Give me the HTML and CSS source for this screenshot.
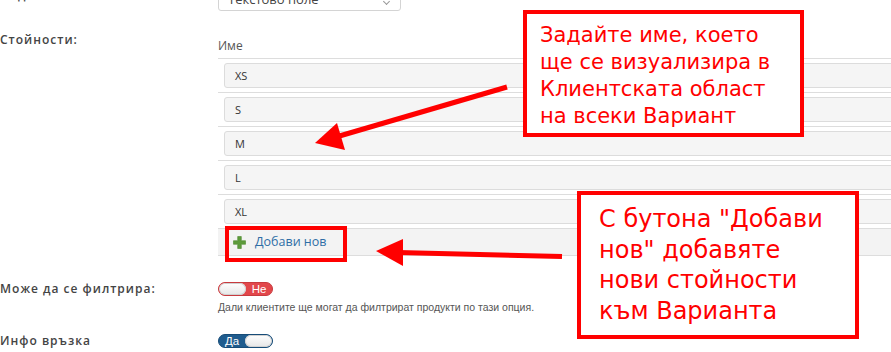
FILE: index.html
```html
<!DOCTYPE html>
<html lang="bg">
<head>
<meta charset="utf-8">
<title>Стойности</title>
<link rel="stylesheet" href="styles.css">
</head>
<body>
<div class="page">
  <div class="form">
    <div class="row row-type">
      <div class="label label-type">Вид:</div>
      <div class="field">
        <div class="select">Текстово поле<span class="caret"></span></div>
      </div>
    </div>

    <div class="row row-values">
      <div class="label">Стойности:</div>
      <div class="field">
        <div class="values">
          <div class="values-head">Име</div>
          <div class="value-row"><div class="value-input">XS</div></div>
          <div class="value-row"><div class="value-input">S</div></div>
          <div class="value-row"><div class="value-input">M</div></div>
          <div class="value-row"><div class="value-input">L</div></div>
          <div class="value-row"><div class="value-input">XL</div></div>
          <div class="add-row">
            <a class="add-btn">
              <svg class="plus" width="13" height="13" viewBox="0 0 13 13"><path d="M4.7 0.5h3.6v4.2h4.2v3.6h-4.2v4.2h-3.6v-4.2h-4.2v-3.6h4.2z" fill="#5d9b3b" stroke="#4c8a2e" stroke-width="0.6" stroke-linejoin="round"/></svg>
              <span>Добави нов</span>
            </a>
          </div>
        </div>
      </div>
    </div>

    <div class="row row-filter">
      <div class="label label-small">Може да се филтрира:</div>
      <div class="field">
        <div class="toggle toggle-off"><span class="knob"></span><span class="toggle-text">Не</span></div>
        <div class="help">Дали клиентите ще могат да филтрират продукти по тази опция.</div>
      </div>
    </div>

    <div class="row row-info">
      <div class="label label-small">Инфо връзка</div>
      <div class="field">
        <div class="toggle toggle-on"><span class="toggle-text">Да</span><span class="knob"></span></div>
      </div>
    </div>
  </div>

  <div class="note note-name">Задайте име, което<br>ще се визуализира в<br>Клиентската област<br>на всеки Вариант</div>
  <div class="note note-add">С бутона "Добави<br>нов" добавяте<br>нови стойности<br>към Варианта</div>
  <div class="highlight"></div>
  <svg class="arrows" width="891" height="352" viewBox="0 0 891 352">
    <line x1="507" y1="87" x2="336" y2="137" stroke="#ff0000" stroke-width="5"/>
    <polygon points="315,143 337,123 345,150" fill="#ff0000"/>
    <line x1="562" y1="256.5" x2="398" y2="252.5" stroke="#ff0000" stroke-width="5"/>
    <polygon points="376,251 403,239 403,266" fill="#ff0000"/>
  </svg>
</div>
</body>
</html>
```
FILE: styles.css
```css
html, body {
  margin: 0;
  padding: 0;
  background: #ffffff;
}
body {
  width: 891px;
  height: 352px;
  overflow: hidden;
  font-family: "Open Sans", "Liberation Sans", sans-serif;
  color: #333;
}
.page {
  position: relative;
  width: 891px;
  height: 352px;
  overflow: hidden;
}
.form {
  margin-top: -20px;
}
.row {
  display: flex;
}
.label {
  width: 218px;
  flex: none;
  font-size: 12px;
  font-weight: 600;
  letter-spacing: 1px;
  color: #444;
  line-height: 20px;
}
.label-type {
  line-height: 30px;
  height: 31px;
}
.label-small {
  line-height: 14px;
}
.field {
  flex: 1;
  min-width: 0;
}
.select {
  position: relative;
  width: 183px;
  height: 31px;
  box-sizing: border-box;
  border: 1px solid #d4d4d4;
  border-radius: 3px;
  padding-left: 9px;
  font-size: 13px;
  line-height: 36px;
  color: #444;
  overflow: hidden;
}
.caret {
  position: absolute;
  right: 11px;
  top: 18px;
  width: 4px;
  height: 4px;
  border-right: 1px solid #999;
  border-bottom: 1px solid #999;
  transform: rotate(45deg);
}
.row-values {
  margin-top: 19px;
}
.values {
  width: 700px;
}
.values-head {
  padding: 8px 0 5px 0;
  line-height: 15px;
  font-size: 12px;
  color: #555;
  border-bottom: 1px solid #dddddd;
}
.value-row {
  padding: 4px 0 4px 6px;
  border-bottom: 1px solid #dddddd;
}
.value-input {
  height: 25px;
  box-sizing: border-box;
  border: 1px solid #dcdcdc;
  border-radius: 3px;
  background: #f5f5f5;
  padding-left: 10px;
  font-size: 11px;
  line-height: 23px;
  color: #333;
}
.add-row {
  height: 26px;
  background: #f3f3f3;
  border-bottom: 1px solid #dddddd;
  display: flex;
  align-items: center;
  padding-left: 15px;
}
.add-btn {
  display: flex;
  align-items: center;
  gap: 9px;
  color: #2f6ea6;
  font-size: 12.5px;
  line-height: 16px;
}
.plus {
  display: block;
}
.row-filter {
  margin-top: 26px;
}
.row-info {
  margin-top: 20px;
}
.toggle {
  display: flex;
  width: 55px;
  height: 14px;
  box-sizing: border-box;
  border-radius: 7px;
  overflow: hidden;
  font-family: "Liberation Sans", sans-serif;
  font-size: 11.5px;
  color: #fff;
  line-height: 12px;
}
.toggle-off {
  background: #e2474b;
  border: 1px solid #c83a3e;
}
.toggle-on {
  background: #1f5c8e;
  border: 1px solid #174c78;
}
.knob {
  width: 27px;
  height: 12px;
  border-radius: 6px;
  background: linear-gradient(#ffffff, #e6e6e6);
  box-shadow: inset 0 0 0 1px #d0d0d0;
  flex: none;
}
.toggle-text {
  flex: 1;
  text-align: center;
}
.help {
  margin-top: 4px;
  font-family: "Liberation Sans", sans-serif;
  font-size: 10.5px;
  line-height: 14px;
  color: #555;
}
.note {
  position: absolute;
  background: #fff;
  border: 4px solid #ff0000;
  box-sizing: border-box;
  color: #ff0000;
  font-family: "DejaVu Sans", sans-serif;
}
.note-name {
  left: 523px;
  top: 10px;
  width: 281px;
  height: 127px;
  padding: 8px 0 0 13px;
  font-size: 21px;
  line-height: 27px;
}
.note-add {
  left: 577px;
  top: 191px;
  width: 282px;
  height: 148px;
  padding: 9px 0 0 18px;
  font-size: 24px;
  line-height: 30.6px;
}
.highlight {
  position: absolute;
  left: 225px;
  top: 226px;
  width: 122px;
  height: 36px;
  box-sizing: border-box;
  border: 4px solid #ff0000;
}
.arrows {
  position: absolute;
  left: 0;
  top: 0;
  pointer-events: none;
}
```
